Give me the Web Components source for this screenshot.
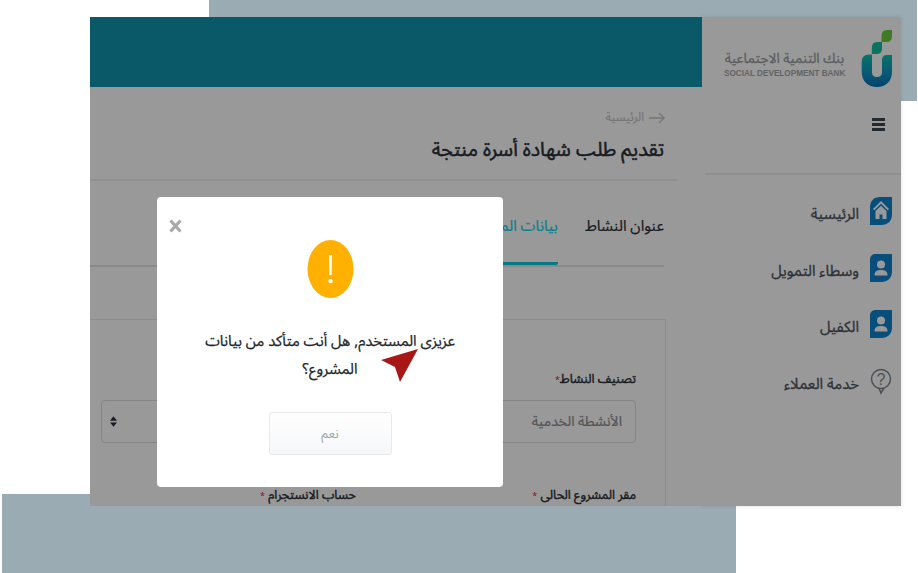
<!DOCTYPE html>
<html lang="ar" dir="rtl"><head><meta charset="utf-8"><style>
html,body{margin:0;padding:0;background:#fff}
body{width:918px;height:573px;overflow:hidden;font-family:"Noto Sans","DejaVu Sans",sans-serif}
</style></head><body>
<sdb-stage>
  <sdb-screen>
    <sdb-sidebar slot="side">
      <sdb-nav-item label="الرئيسية" icon="home"></sdb-nav-item>
      <sdb-nav-item label="وسطاء التمويل" icon="user"></sdb-nav-item>
      <sdb-nav-item label="الكفيل" icon="user"></sdb-nav-item>
      <sdb-nav-item label="خدمة العملاء" icon="help"></sdb-nav-item>
    </sdb-sidebar>
    <sdb-main slot="main"></sdb-main>
    <sdb-modal slot="modal"></sdb-modal>
  </sdb-screen>
</sdb-stage>
<script>
function def(name,html){
  customElements.define(name,class extends HTMLElement{
    constructor(){super();this.attachShadow({mode:'open'});}
    connectedCallback(){ this.shadowRoot.innerHTML=typeof html==='function'?html(this):html; }
  });
}
const FONT='"Noto Sans Arabic","Noto Sans","DejaVu Sans",sans-serif';
def('sdb-stage',`<style>
:host{display:block;position:relative;width:918px;height:573px;overflow:hidden}
.top{position:absolute;left:209px;top:0;width:708px;height:101px;background:#9aabb4}
.bot{position:absolute;left:2px;top:494px;width:734px;height:79px;background:#9aabb4}
.win{position:absolute;left:90px;top:17px;width:811px;height:489px}
.cur{position:absolute;left:381px;top:349px;width:38px;height:34px}
</style><div class="top"></div><div class="bot"></div><div class="win"><slot></slot></div>
<svg class="cur" viewBox="381 349 38 34"><polygon points="418,349 381,360 395,367 400,382" fill="#a81616"/></svg>`);
def('sdb-screen',`<style>
:host{display:grid;grid-template-columns:199px 612px;direction:rtl;position:relative;width:811px;height:489px;background:#fff}
.back{position:absolute;inset:0;background:rgba(0,0,0,.4)}
.modal{position:absolute;left:67px;top:180px}
</style><slot name="side"></slot><slot name="main"></slot><div class="back"></div><div class="modal"><slot name="modal"></slot></div>`);
def('sdb-sidebar',`<style>
:host{display:flex;flex-direction:column;height:489px;background:#fff;box-shadow:0 0 4px rgba(0,0,0,.12);position:relative;direction:rtl;font-family:${FONT}}
.brand{display:flex;align-items:flex-start;gap:16px;padding:12px 8px 0 0;height:70px;box-sizing:content-box}
.brand svg{width:32px;height:59px;flex:none}
.names{margin-top:22px;display:flex;flex-direction:column;width:121px;text-align:center}
.ar{display:block;font-size:13.7px;line-height:15px;height:15px;white-space:nowrap;color:#9a9da0;-webkit-text-stroke:.3px #9a9da0}
.en{display:block;margin-top:2px;direction:ltr;font:700 8.2px/11px "Liberation Sans",sans-serif;white-space:nowrap;color:#a4a7aa}
.burger{display:flex;padding:19px 16px 0 0}
.burger i{display:block;width:13px;height:13px;background:linear-gradient(#3a4650 0 3px,transparent 3px 5px,#3a4650 5px 8px,transparent 8px 10px,#3a4650 10px 13px)}
hr{border:0;height:2px;background:#eee;margin:42px 0 0 0;width:196px}
nav{display:flex;flex-direction:column;padding-top:8px}
</style>
<div class="brand">
<svg viewBox="862 29 32 59"><defs><linearGradient id="g" x1="0" y1="0" x2="0" y2="1"><stop offset="0" stop-color="#0fc0b0"/><stop offset=".65" stop-color="#0f8fc0"/><stop offset="1" stop-color="#0070b8"/></linearGradient></defs>
<path d="M882.5 42V36Q882.5 30 888 30H893V36Q893 42 887.500 42Z" fill="#6ccc3c"/>
<path d="M872.8 54V48Q872.8 42 878 42H883V48Q883 54 878 54Z" fill="#12bf9f"/>
<path d="M862.7 62Q862.7 54.500 870 54.500H873V72.500C873 75.500 875.200 77 878 77C880.800 77 883 75.500 883 72.500V60Q883 55 888 55H893V72C893 81.500 886.500 87 878 87C869.500 87 862.700 81.500 862.700 72Z" fill="url(#g)"/>
</svg>
<div class="names"><span class="ar">بنك التنمية الاجتماعية</span><span class="en">SOCIAL DEVELOPMENT BANK</span></div>
</div>
<div class="burger"><i></i></div>
<hr>
<nav><slot></slot></nav>`);
const ICONS={
home:`<path d="M0 10C0 4 4 0 10 0H22V17C22 24 18 28 11 28H0Z" fill="#0d83ce"/><path d="M11 4L3 12L4.300 13.300L11 6.800L17.700 13.300L19 12Z M5.500 14V22H9.500V17.500H12.500V22H16.500V14L11 8.800Z" fill="#fff"/>`,
user:`<path d="M0 6C0 2 2 0 6 0H22V17C22 24 18 28 11 28H0Z" fill="#0d83ce"/><circle cx="11" cy="10.500" r="4" fill="#fff"/><path d="M4.500 21.500C4.500 17 7.500 16 11 16S17.500 17 17.500 21.500Z" fill="#fff"/>`,
help:`<circle cx="11" cy="12" r="9.500" fill="none" stroke="#808790" stroke-width="1.500"/><path d="M9 21.300L11 26L14 21" fill="none" stroke="#808790" stroke-width="1.500"/><text x="11" y="18" text-anchor="middle" font-size="16" fill="#808790" font-family="Liberation Sans">?</text>`};
def('sdb-nav-item',el=>`<style>
:host{display:flex;align-items:center;gap:11px;height:56.5px;padding-right:9px;direction:rtl}
svg{width:22px;height:28px;flex:none}
span{font-size:15px;margin-top:6px;color:#4d5460;-webkit-text-stroke:.3px #4d5460;white-space:nowrap}
</style><svg viewBox="0 0 22 28">${ICONS[el.getAttribute('icon')]}</svg><span>${el.getAttribute('label')}</span>`);
def('sdb-main',`<style>
:host{display:block;height:489px;background:#fff;direction:rtl;font-family:${FONT};position:relative}
.head{height:70px;background:#0f95b0}
.crumb{display:flex;align-items:center;gap:5px;padding:19px 37px 0 0;height:22px;color:#c4c4c4;-webkit-text-stroke:.15px #c4c4c4;font-size:12px;margin-bottom:10px}
.crumb svg{width:16px;height:12px;margin-top:2px}
h1{margin:0;padding:0 38px 0 0;font-size:19.5px;font-weight:400;-webkit-text-stroke:.5px #2b3036;color:#2b3036;line-height:24px;height:28px;white-space:nowrap}
.rule{height:2px;background:#eee;margin:13px 25px 0 0;width:587px}
.tabs{display:flex;gap:27px;margin:19px 38px 0 0;border-bottom:2px solid #e4e4e4;height:67px;box-sizing:border-box}
.tab{font-size:15px;color:#2b3036;-webkit-text-stroke:.2px #2b3036;height:65px;line-height:52px;white-space:nowrap;box-sizing:border-box}
.tab.on{color:#10d4eb;-webkit-text-stroke:.2px #10d4eb;border-bottom:3px solid #0accdd;border-radius:0 0 2px 2px}
.card{margin:52px 36px 0 0;border:1px solid #ececec;border-left:0;border-bottom:0;padding:50px 29px 0 30px;height:187px;box-sizing:border-box;position:relative}
.lab{font-size:12.5px;color:#2a2f36;-webkit-text-stroke:.4px #2a2f36;line-height:18px;white-space:nowrap}
.lab b{color:#d42a48;-webkit-text-stroke:0;font-weight:400;font-size:9px}
.sel{margin-top:10px;height:43px;width:535px;border:1px solid #dedede;border-radius:4px;box-sizing:border-box;display:flex;justify-content:space-between;align-items:center;padding:0 13px 0 8px;color:#8a8e93;-webkit-text-stroke:.2px #8a8e93;font-size:14px}
.sel svg{width:7px;height:11px}
.row{display:flex;margin-top:43px;width:535px}
.row>div{flex:none;width:280px}
</style>
<div class="head"></div>
<div class="crumb"><svg viewBox="0 0 16 12"><path d="M0 6H15M10 1L15 6L10 11" fill="none" stroke="#c4c4c4" stroke-width="1.400"/></svg><span>الرئيسية</span></div>
<h1>تقديم طلب شهادة أسرة منتجة</h1>
<div class="rule"></div>
<div class="tabs"><div class="tab">عنوان النشاط</div><div class="tab on">بيانات المشروع</div></div>
<div class="card">
<div class="lab">تصنيف النشاط<b>*</b></div>
<div class="sel"><span>الأنشطة الخدمية</span><svg viewBox="0 0 8 12"><path d="M4 0L8 5H0ZM4 12L0 7H8Z" fill="#2b3036"/></svg></div>
<div class="row"><div class="lab">مقر المشروع الحالى <b>*</b></div><div class="lab">حساب الانستجرام <b>*</b></div></div>
</div>`);
def('sdb-modal',`<style>
:host{display:flex;flex-direction:column;align-items:center;position:relative;width:346px;height:290px;background:#fff;border-radius:4px;direction:rtl;font-family:${FONT};box-sizing:border-box;padding-top:43px}
.x{position:absolute;left:12px;top:22px;width:13px;height:14px}
.warn{width:47px;height:58px;flex:none}
p{margin:30px 0 0;width:270px;text-align:center;font-size:14.8px;-webkit-text-stroke:.25px #22272c;line-height:28px;color:#22272c}
button{all:unset;box-sizing:border-box;margin-top:28px;width:123px;height:43px;border:1px solid #e8e9eb;border-radius:3px;background:linear-gradient(#fff,#f6f7f9);text-align:center;font-size:13px;line-height:42px;color:#a5a5a5;font-family:${FONT}}
</style>
<svg class="x" viewBox="0 0 13 14"><path d="M1.500 1.500L11.500 12.500M11.500 1.500L1.500 12.500" stroke="#a9a9a9" stroke-width="3.200" fill="none"/></svg>
<svg class="warn" viewBox="0 0 47 58"><ellipse cx="23.500" cy="29" rx="23" ry="29" fill="#ffb000"/><path d="M21.900 15H25.100L24.600 35H22.400Z" fill="#fff"/><circle cx="23.500" cy="41" r="2.200" fill="#fff"/></svg>
<p>عزيزى المستخدم, هل أنت متأكد من بيانات المشروع؟</p>
<button>نعم</button>`);
</script></body></html>
